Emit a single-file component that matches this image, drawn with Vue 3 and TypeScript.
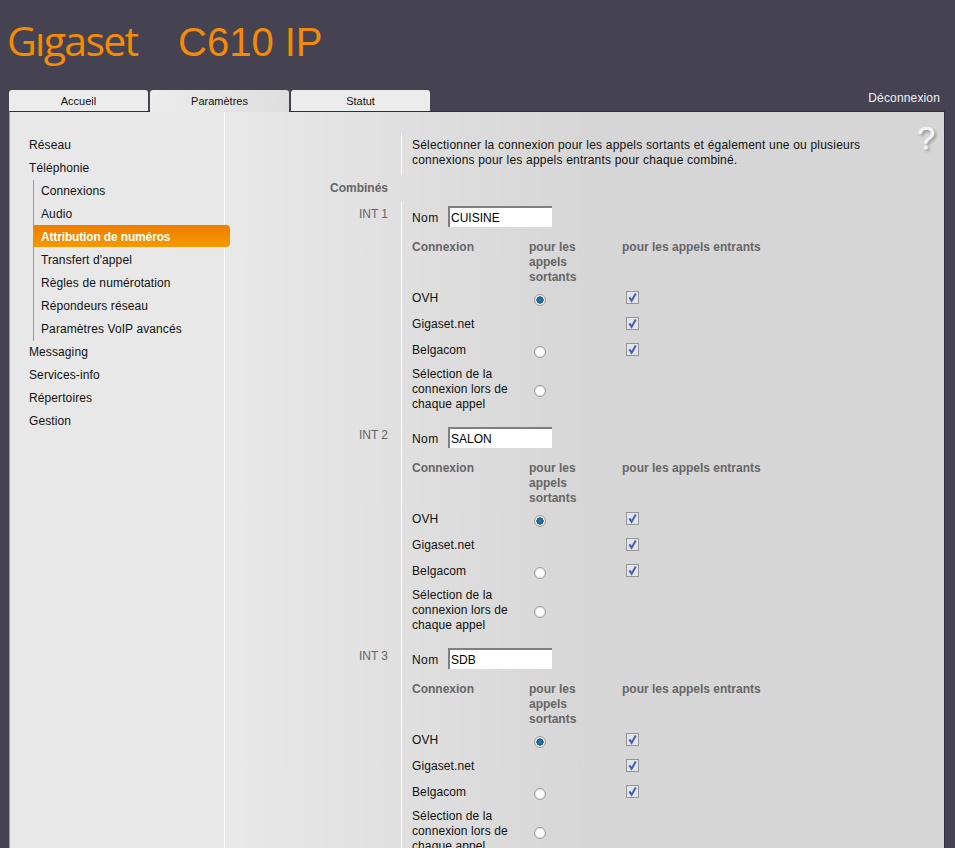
<script setup lang="ts">
const tabs = [
  { label: 'Accueil', active: false },
  { label: 'Paramètres', active: true },
  { label: 'Statut', active: false },
]
const topBefore = ['Réseau', 'Téléphonie']
const sub = [
  'Connexions',
  'Audio',
  'Attribution de numéros',
  "Transfert d'appel",
  'Règles de numérotation',
  'Répondeurs réseau',
  'Paramètres VoIP avancés',
]
const topAfter = ['Messaging', 'Services-info', 'Répertoires', 'Gestion']
const handsets = [
  { id: 'INT 1', name: 'CUISINE' },
  { id: 'INT 2', name: 'SALON' },
  { id: 'INT 3', name: 'SDB' },
]
const conns = [
  { label: 'OVH', radio: true, checked: true, box: true, tall: false },
  { label: 'Gigaset.net', radio: false, checked: false, box: true, tall: false },
  { label: 'Belgacom', radio: true, checked: false, box: true, tall: false },
  { label: 'Sélection de la connexion lors de chaque appel', radio: true, checked: false, box: false, tall: true },
]
</script>

<template>
  <div class="page">
    <header class="brand">
      <span class="logo">Gıgaset</span>
      <span class="model">C610 IP</span>
    </header>
    <div class="tabbar">
      <nav class="tabs">
        <span v-for="t in tabs" :key="t.label" class="tab" :class="{ active: t.active }">{{ t.label }}</span>
      </nav>
      <span class="logout">Déconnexion</span>
    </div>
    <main class="panel">
      <aside class="side">
        <div v-for="m in topBefore" :key="m" class="item">{{ m }}</div>
        <div class="sub">
          <div v-for="(s, i) in sub" :key="s" class="item subitem" :class="{ current: i === 2 }">{{ s }}</div>
        </div>
        <div v-for="m in topAfter" :key="m" class="item">{{ m }}</div>
      </aside>
      <section class="content">
        <span class="help">?</span>
        <div class="row intro-row">
          <div class="lab"></div>
          <p class="intro">Sélectionner la connexion pour les appels sortants et également une ou plusieurs connexions pour les appels entrants pour chaque combiné.</p>
        </div>
        <div class="heading">Combinés</div>
        <div v-for="h in handsets" :key="h.id" class="row">
          <div class="lab int">{{ h.id }}</div>
          <div class="body">
            <div class="name-line">
              <label class="name-label">Nom</label>
              <input class="name" type="text" :value="h.name" />
            </div>
            <div class="grid">
              <div class="th">Connexion</div>
              <div class="th">pour les appels sortants</div>
              <div class="th">pour les appels entrants</div>
              <template v-for="c in conns" :key="c.label">
                <div class="conn">{{ c.label }}</div>
                <div class="cell">
                  <span v-if="c.radio" class="radio" :class="{ on: c.checked, tall: c.tall }"></span>
                </div>
                <div class="cell">
                  <svg v-if="c.box" class="check" width="13" height="13" viewBox="0 0 13 13">
                    <rect x="0.5" y="0.5" width="12" height="12" fill="#e3e5ec" stroke="#959595" />
                    <path d="M3.4 6.4 L5.6 9.8 L9.8 2.6" fill="none" stroke="#4560ac" stroke-width="2" />
                  </svg>
                </div>
              </template>
            </div>
          </div>
        </div>
      </section>
    </main>
  </div>
</template>

<style>
html, body { margin: 0; background: #454352; overflow: hidden; }
</style>

<style scoped>
.page {
  width: 955px;
  height: 848px;
  overflow: hidden;
  background: #454352;
  font-family: "Liberation Sans", Arial, sans-serif;
  font-size: 12px;
  color: #111;
  box-sizing: border-box;
}
.brand {
  height: 90px;
  display: flex;
  align-items: flex-start;
  color: #f48a05;
}
.logo {
  width: 171px;
  flex: none;
  padding-left: 7px;
  margin-top: 17px;
  font-family: "Open Sans", sans-serif;
  font-size: 41px;
  font-weight: 500;
  line-height: 46px;
  letter-spacing: -1.7px;
}
.model {
  margin-top: 19px;
  font-size: 40px;
  line-height: 46px;
}
.tabbar {
  display: flex;
  justify-content: space-between;
  margin-left: 9px;
  height: 21px;
}
.tabs { display: flex; gap: 2px; }
.tab {
  width: 139px;
  height: 21px;
  background: #ececec;
  border-radius: 3px 3px 0 0;
  text-align: center;
  font-size: 11px;
  line-height: 22px;
  color: #111;
}
.tab.active {
  position: relative;
  z-index: 1;
  background: linear-gradient(100deg, #ececec, #dedede);
  height: 22px;
}
.logout {
  color: #f2f2f2;
  margin: 1px 15px 0 0;
  line-height: 14px;
  letter-spacing: 0.15px;
}
.panel {
  display: flex;
  margin-left: 9px;
  width: 936px;
  height: 761px;
  box-sizing: border-box;
  border-top: 1px solid #2f2e3a;
  border-left: 1px solid #9c9c9c;
  border-right: 1px solid #2f2e3a;
  background: linear-gradient(90deg, #e8e8e8 0%, #e8e8e8 24%, #d6d6d6 62%, #d6d6d6 100%);
}
.side {
  width: 215px;
  flex: none;
  padding-top: 22px;
  box-sizing: border-box;
  background: #e8e8e8;
  border-right: 1px solid #fff;
  font-size: 12px;
}
.item {
  height: 23px;
  line-height: 23px;
  padding-left: 19px;
  letter-spacing: 0.1px;
}
.sub {
  margin-left: 23px;
  width: 196px;
  border-left: 1px solid #9a9a9a;
}
.subitem { padding-left: 7px; }
.subitem.current {
  height: 22px;
  line-height: 24px;
  margin-top: -1px;
  margin-bottom: 2px;
  background: linear-gradient(#ee7c00, #f59a00);
  border-radius: 0 4px 4px 0;
  color: #fff;
  font-weight: bold;
  letter-spacing: -0.15px;
}
.content { flex: 1; position: relative; min-width: 0; }
.help {
  position: absolute;
  top: 8px;
  right: 9px;
  font-size: 32px;
  line-height: 36px;
  color: #f4f4f4;
  -webkit-text-stroke: 0.5px #f4f4f4;
  text-shadow: 2px 2px 3px #8a8a8a;
}
.row { display: flex; }
.intro-row { margin-top: 21px; }
.lab {
  width: 176px;
  flex: none;
  text-align: right;
  color: #666;
  padding-right: 13px;
  box-sizing: border-box;
}
.lab.int {
  font-size: 12px;
  line-height: 14px;
  padding-top: 5px;
}
.intro {
  margin: 0;
  width: 480px;
  padding-left: 10px;
  border-left: 1px solid #fff;
  line-height: 15px;
  height: 42px;
  padding-top: 5px;
  box-sizing: border-box;
  letter-spacing: 0.2px;
}
.heading {
  width: 163px;
  text-align: right;
  font-weight: bold;
  color: #666;
  height: 27px;
  line-height: 26px;
}
.body {
  border-left: 1px solid #fff;
  padding-left: 10px;
  height: 221px;
  box-sizing: border-box;
  width: 540px;
}
.name-line {
  display: flex;
  align-items: center;
  padding-top: 4px;
  height: 25px;
  box-sizing: border-box;
}
.name-label { width: 36px; letter-spacing: 0.4px; padding-top: 2px; }
.name {
  width: 104px;
  height: 21px;
  box-sizing: border-box;
  border: 0;
  border-top: 2px solid #7f7f7f;
  border-left: 2px solid #7f7f7f;
  outline: 0;
  padding: 0 0 0 1px;
  background: #fff;
  font: 12px "Liberation Sans", Arial, sans-serif;
  color: #000;
}
.grid {
  display: grid;
  grid-template-columns: 117px 93px 160px;
  grid-template-rows: 53px 26px 26px 24px auto;
  margin-top: 11px;
  line-height: 15px;
}
.th { font-weight: bold; color: #666; padding-top: 2px; }
.th:nth-child(2) { width: 60px; }
.conn { width: 105px; letter-spacing: 0.1px; }
.cell { position: relative; }
.radio {
  display: block;
  margin: 3px 0 0 5px;
  width: 12px;
  height: 12px;
  box-sizing: border-box;
  border-radius: 50%;
  border: 1px solid #9a9a9a;
  background: #fbfbfb;
  box-shadow: inset 0 0 0 1px #e6e6e6;
}
.radio.tall { margin-top: 18px; }
.radio.on {
  box-shadow: none;
  background: radial-gradient(circle, #1679b5 0 2px, #123a58 3.4px, #ececec 3.8px);
}
.check { position: absolute; left: 4px; top: 0; }
</style>
